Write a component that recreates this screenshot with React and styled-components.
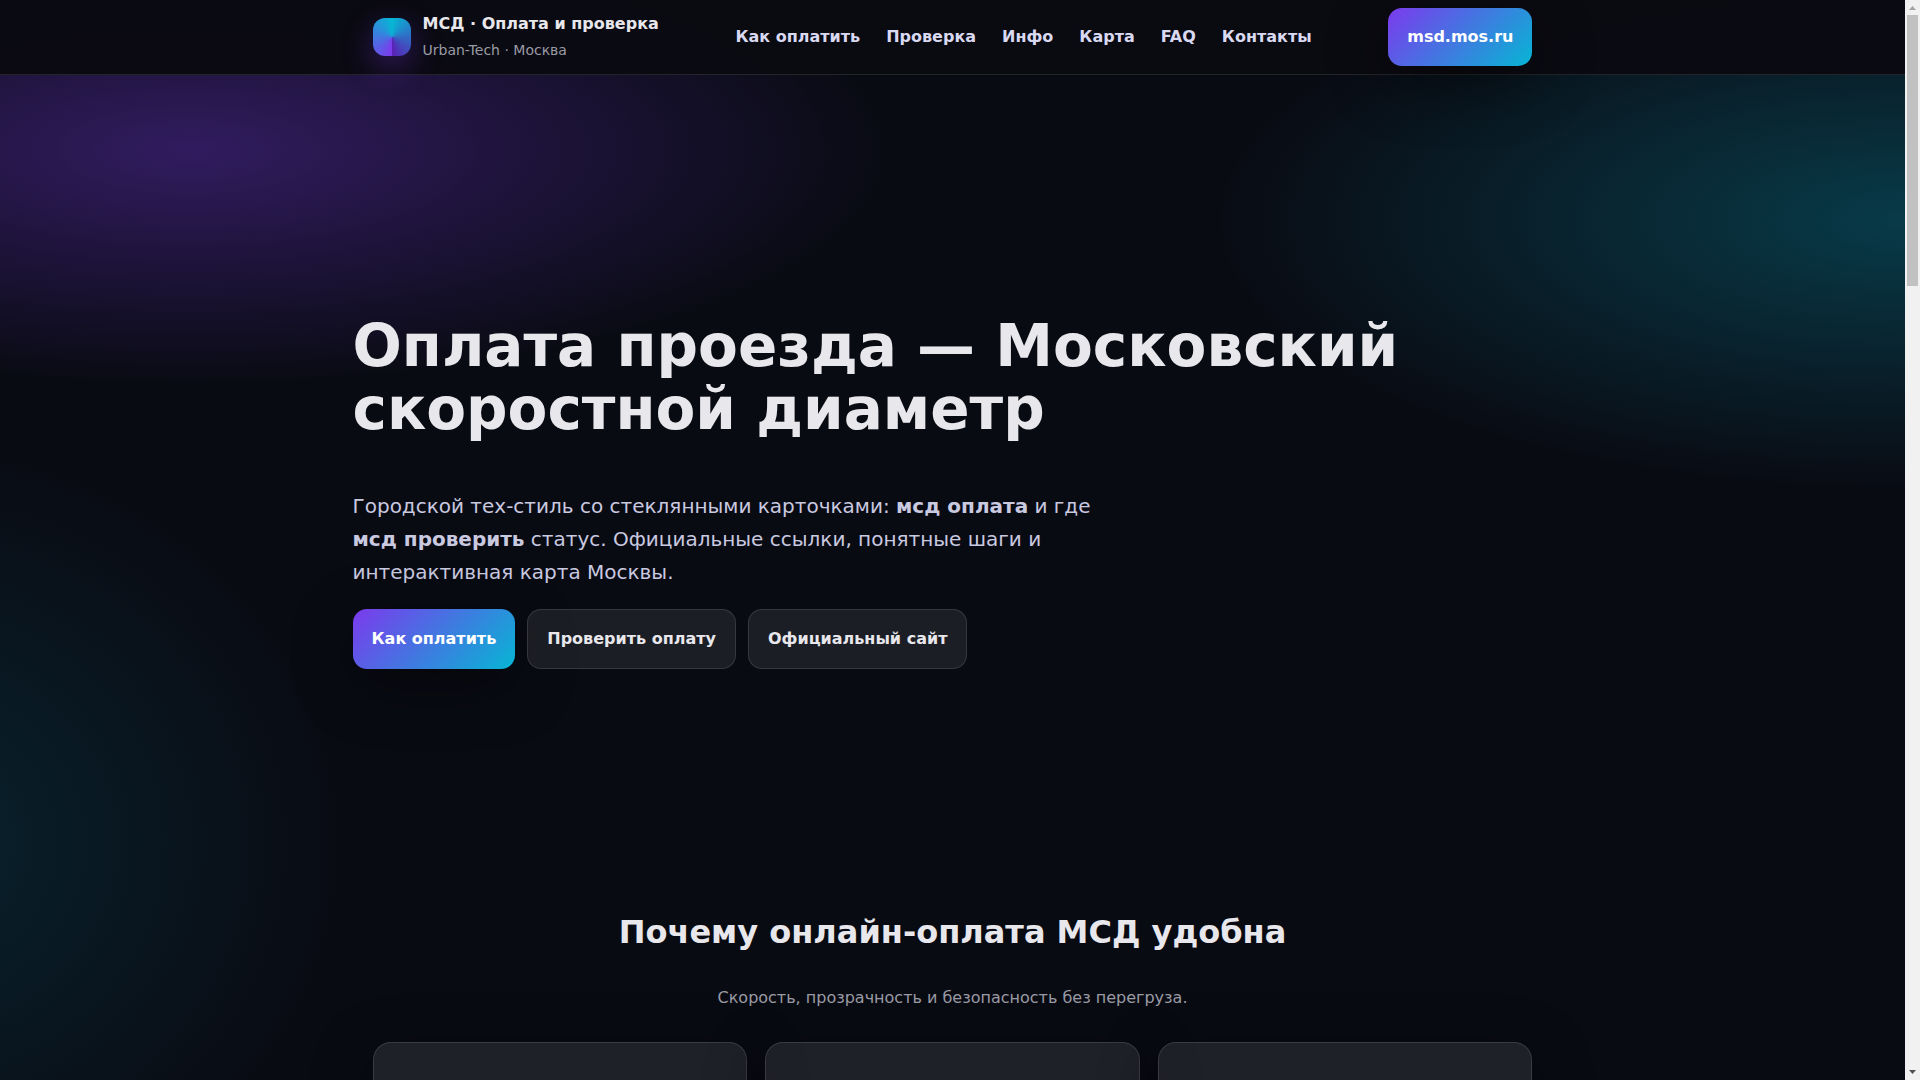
import React from "react";
import styled, { createGlobalStyle, css } from "styled-components";

const GlobalStyle = createGlobalStyle`
  *, *::before, *::after { box-sizing: border-box; }
  html, body, #root { height: 100%; }
  body {
    margin: 0;
    overflow: hidden;
    background: #090b13;
    color: #e8e7ec;
    font-family: "DejaVu Sans", "Noto Sans", sans-serif;
    font-size: 16px;
    line-height: 26px;
  }
`;

const Shell = styled.div`
  display: grid;
  grid-template-columns: minmax(0, 1fr) 15px;
  height: 100vh;
`;

const Page = styled.div`
  display: flex;
  flex-direction: column;
  height: 100vh;
  overflow: hidden;
  background:
    radial-gradient(700px 235px at 10% 150px, rgba(124, 58, 237, 0.35), transparent),
    radial-gradient(690px 270px at 100% 220px, rgba(6, 182, 212, 0.28), transparent),
    radial-gradient(440px 400px at -5% 78%, rgba(6, 182, 212, 0.14), transparent),
    #090b13;
`;

const Header = styled.header`
  flex: none;
  background: rgba(10, 10, 18, 0.97);
  border-bottom: 1px solid #242529;
`;

const HeaderInner = styled.div`
  display: flex;
  align-items: center;
  justify-content: space-between;
  max-width: 1200px;
  margin: 0 auto;
  padding: 8px 20px;
`;

const Brand = styled.a`
  display: flex;
  align-items: center;
  gap: 12px;
  color: inherit;
  text-decoration: none;
`;

const Logo = styled.span`
  width: 38px;
  height: 38px;
  border-radius: 12px;
  background: conic-gradient(from 180deg, #7c3aed, #06b6d4, #5b21b6);
  box-shadow: 0 10px 30px rgba(124, 58, 237, 0.35);
`;

const BrandText = styled.span`
  display: flex;
  flex-direction: column;
`;

const BrandName = styled.strong`
  font-weight: 700;
`;

const BrandNote = styled.span`
  font-size: 14px;
  color: #9b9ba5;
`;

const Nav = styled.nav`
  display: flex;
  gap: 26px;
`;

const NavLink = styled.a`
  color: #d9d9f2;
  font-weight: 700;
  text-decoration: none;
`;

const ButtonLink = styled.a`
  display: inline-flex;
  align-items: center;
  padding: 16px 19px;
  border-radius: 14px;
  font-weight: 700;
  text-decoration: none;
  ${(p) =>
    p.$primary
      ? css`
          color: #fff;
          background: linear-gradient(135deg, #7c3aed, #06b6d4);
          box-shadow: 0 16px 60px rgba(0, 0, 0, 0.45);
        `
      : css`
          color: #e8e7ec;
          background: rgba(255, 255, 255, 0.08);
          border: 1px solid rgba(255, 255, 255, 0.12);
        `}
`;

const Hero = styled.section`
  width: 100%;
  max-width: 1200px;
  margin: 0 auto;
  padding: 240px 0 236px;
`;

const HeroTitle = styled.h1`
  margin: 0 0 49px;
  font-size: 58px;
  line-height: 63px;
  font-weight: 700;
`;

const Lead = styled.p`
  max-width: 760px;
  margin: 0 0 20px;
  font-size: 20px;
  line-height: 33px;
  color: #c9c9e0;
`;

const Actions = styled.div`
  display: flex;
  flex-wrap: wrap;
  gap: 12px;
`;

const Section = styled.section`
  width: 100%;
  max-width: 1200px;
  margin: 0 auto;
  padding: 0 20px;
  text-align: center;
`;

const SectionTitle = styled.h2`
  margin: 0 0 26px;
  font-size: 32px;
  line-height: 54px;
  font-weight: 700;
`;

const SectionNote = styled.p`
  margin: 0 0 31px;
  color: #9b9ba5;
`;

const Cards = styled.div`
  display: grid;
  grid-template-columns: repeat(3, 1fr);
  gap: 18px;
`;

const Card = styled.article`
  min-height: 220px;
  border-radius: 18px;
  background: rgba(255, 255, 255, 0.09);
  border: 1px solid rgba(255, 255, 255, 0.12);
  box-shadow: 0 16px 60px rgba(0, 0, 0, 0.45);
`;

const Scrollbar = styled.div`
  display: flex;
  flex-direction: column;
  align-items: center;
  height: 100vh;
  background: #f1f1f1;
`;

const Thumb = styled.div`
  width: 11px;
  height: 271px;
  background: #c1c1c1;
`;

const Arrow = styled.svg`
  display: block;
  width: 15px;
  height: 15px;
  ${(p) => p.$down && "margin-top: auto;"}
`;

const links = ["Как оплатить", "Проверка", "Инфо", "Карта", "FAQ", "Контакты"];

export default function App() {
  return (
    <>
      <GlobalStyle />
      <Shell>
        <Page>
          <Header>
            <HeaderInner>
              <Brand href="#top">
                <Logo />
                <BrandText>
                  <BrandName>МСД · Оплата и проверка</BrandName>
                  <BrandNote>Urban-Tech · Москва</BrandNote>
                </BrandText>
              </Brand>
              <Nav>
                {links.map((label) => (
                  <NavLink href="#" key={label}>{label}</NavLink>
                ))}
              </Nav>
              <ButtonLink $primary href="#">msd.mos.ru</ButtonLink>
            </HeaderInner>
          </Header>
          <main>
            <Hero id="top">
              <HeroTitle>Оплата проезда — Московский скоростной диаметр</HeroTitle>
              <Lead>
                Городской тех-стиль со стеклянными карточками: <strong>мсд оплата</strong> и где{" "}
                <strong>мсд проверить</strong> статус. Официальные ссылки, понятные шаги и
                интерактивная карта Москвы.
              </Lead>
              <Actions>
                <ButtonLink $primary href="#">Как оплатить</ButtonLink>
                <ButtonLink href="#">Проверить оплату</ButtonLink>
                <ButtonLink href="#">Официальный сайт</ButtonLink>
              </Actions>
            </Hero>
            <Section>
              <SectionTitle>Почему онлайн-оплата МСД удобна</SectionTitle>
              <SectionNote>Скорость, прозрачность и безопасность без перегруза.</SectionNote>
              <Cards>
                <Card />
                <Card />
                <Card />
              </Cards>
            </Section>
          </main>
        </Page>
        <Scrollbar aria-hidden="true">
          <Arrow viewBox="0 0 15 15"><path d="M4 10h7L7.500 6z" fill="#a3a3a3" /></Arrow>
          <Thumb />
          <Arrow $down viewBox="0 0 15 15"><path d="M4 5h7L7.500 9z" fill="#505050" /></Arrow>
        </Scrollbar>
      </Shell>
    </>
  );
}
